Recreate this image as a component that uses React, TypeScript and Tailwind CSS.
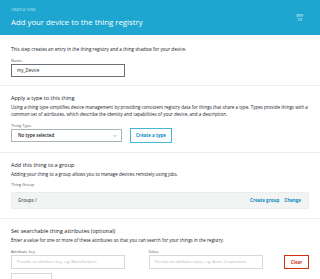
import { ChevronDown } from "lucide-react";

export default function App() {
  return (
    <div className="w-[320px] h-[279px] overflow-hidden bg-white font-['Open_Sans',sans-serif] text-[#16191f]">
      {/* Header */}
      <header className="h-[35px] bg-[#1ea6d1] px-[11px] flex justify-between">
        <div className="pt-[9px]">
          <div className="text-[3px] leading-[3px] tracking-[0.1px] text-[#c4e9f5]">CREATE A THING</div>
          <h1 className="mt-[5.5px] text-[7.8px] leading-[9px] text-white">Add your device to the thing registry</h1>
        </div>
        <div className="pt-[14px] pr-[6px] text-[3px] leading-[4px] text-center font-semibold text-[#d6f1f9]">
          STEP
          <br />
          1/3
        </div>
      </header>

      {/* Name */}
      <section className="px-[11px]">
        <p className="mt-[11px] text-[4.6px] leading-[6px]">
          This step creates an entry in the thing registry and a thing shadow for your device.
        </p>
        <div className="mt-[5.5px] text-[4px] leading-[5px] text-[#545b64]">Name</div>
        <div className="mt-[1px] h-[13px] w-[114px] border border-[#687078] flex items-center pl-[5px] text-[4.5px]">
          my_Device
        </div>
      </section>
      <div className="mt-[8px] border-t border-[#eaeded]" />

      {/* Thing type */}
      <section className="px-[11px]">
        <h2 className="mt-[9.5px] text-[5.5px] leading-[7px] font-medium">Apply a type to this thing</h2>
        <p className="mt-[2px] text-[4.5px] leading-[7px] whitespace-nowrap">
          Using a thing type simplifies device management by providing consistent registry data for things that share a type. Types provide things with a
          <br />
          common set of attributes, which describe the identity and capabilities of your device, and a description.
        </p>
        <div className="mt-[4.5px] text-[4px] leading-[5px] text-[#545b64]">Thing Type</div>
        <div className="mt-[0.5px] h-[15px] flex items-center gap-[8px]">
          <div className="h-[13px] w-[111px] border border-[#aab7b8] flex items-center justify-between pl-[6px] pr-[4px] text-[4.5px] font-semibold">
            No type selected
            <ChevronDown className="w-[4px] h-[4px] text-[#545b64]" strokeWidth={3} />
          </div>
          <button className="h-[15px] w-[42px] border border-[#44b9d6] text-[4.5px] font-bold text-[#0a8bbf]">
            Create a type
          </button>
        </div>
      </section>
      <div className="mt-[8.5px] border-t border-[#eaeded]" />

      {/* Group */}
      <section className="px-[11px]">
        <h2 className="mt-[9px] text-[5.5px] leading-[7px] font-medium">Add this thing to a group</h2>
        <p className="mt-[2.5px] text-[4.5px] leading-[7px]">
          Adding your thing to a group allows you to manage devices remotely using jobs.
        </p>
        <div className="mt-[4px] text-[4px] leading-[5px] text-[#545b64]">Thing Group</div>
        <div className="mt-[4.5px] h-[17px] bg-[#f2f3f3] border border-[#eaeded] flex items-center justify-between pl-[6px] pr-[7px] text-[4.5px]">
          <span className="font-semibold text-[#545b64]">Groups /</span>
          <div className="flex gap-[5px] font-bold text-[#0a8bbf]">
            <span>Create group</span>
            <span>Change</span>
          </div>
        </div>
      </section>
      <div className="mt-[9.5px] border-t border-[#eaeded]" />

      {/* Attributes */}
      <section className="px-[11px]">
        <h2 className="mt-[9px] text-[5.5px] leading-[7px] font-medium">Set searchable thing attributes (optional)</h2>
        <p className="mt-[2.3px] text-[4.5px] leading-[7px]">
          Enter a value for one or more of these attributes so that you can search for your things in the registry.
        </p>
        <div className="mt-[5px] flex text-[4px] leading-[5px] text-[#545b64]">
          <span className="w-[137.5px]">Attribute key</span>
          <span>Value</span>
        </div>
        <div className="mt-[1.2px] flex items-center">
          <div className="h-[13.3px] w-[114px] border border-[#d5dbdb] flex items-center pl-[5px] text-[4px] text-[#aab7b8]">
            Provide an attribute key, e.g. Manufacturer
          </div>
          <div className="ml-[23.5px] h-[13.3px] w-[114px] border border-[#d5dbdb] flex items-center pl-[5px] text-[4px] text-[#aab7b8]">
            Provide an attribute value, e.g. Acme Corporation
          </div>
          <button className="ml-auto h-[13.3px] w-[25px] border border-[#d13212] text-[4.5px] font-bold text-[#d13212]">
            Clear
          </button>
        </div>
        <div className="mt-[4.7px] h-[15px] w-[41px] border border-[#d5dbdb]" />
      </section>
    </div>
  );
}
